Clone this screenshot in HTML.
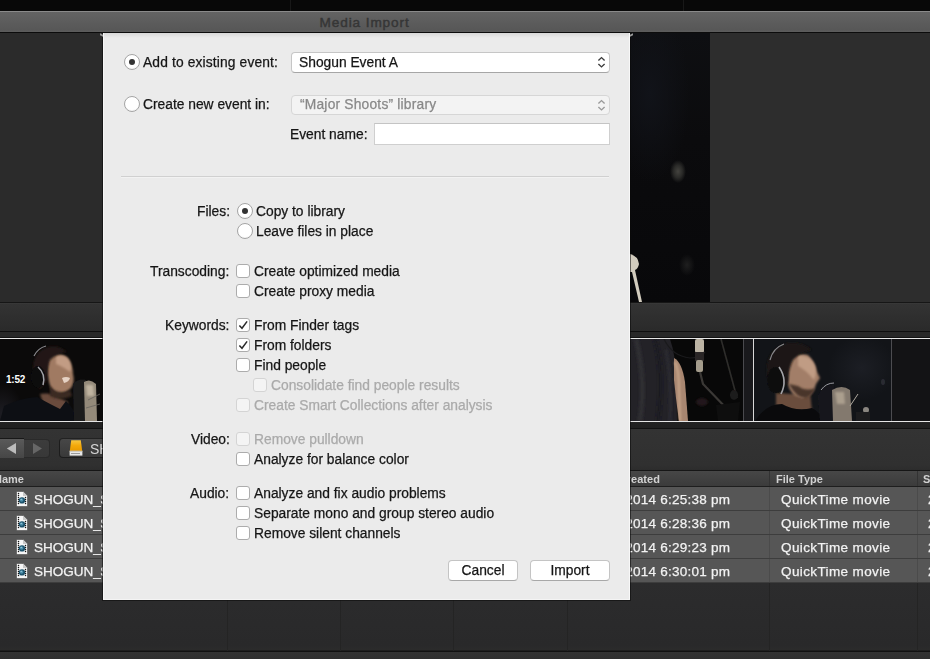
<!DOCTYPE html>
<html><head><meta charset="utf-8">
<style>
*{margin:0;padding:0;box-sizing:border-box}
html,body{width:930px;height:659px;overflow:hidden;background:#2a2a2a;font-family:"Liberation Sans",sans-serif}
.a{position:absolute}
#top{left:0;top:0;width:930px;height:11px;background:#080808}
#title{left:0;top:11px;width:930px;height:22px;background:linear-gradient(#8a8a8a 0,#8a8a8a 1px,#636363 1px,#575757 19px,#5c5c5c 20px,#5c5c5c 21px,#0c0c0c 21px)}
#title span{position:absolute;left:319.5px;top:4px;font-size:13.6px;line-height:16px;color:#363636;letter-spacing:0.9px;-webkit-text-stroke:0.45px #363636}
#lp{left:0;top:33px;width:103px;height:269px;background:#2b2b2b}
#video{left:630px;top:33px;width:80px;height:269px;background:#0c0d11}
#rp{left:710px;top:33px;width:220px;height:269px;background:#2d2d2d}
#strip{left:0;top:302px;width:930px;height:36px;background:linear-gradient(#161616 0,#161616 1px,#3c3c3c 1px,#333 2px,#2a2a2a 29px,#0e0e0e 29px,#0e0e0e 30px,#282828 30px,#282828 35px,#121212 35px)}
#film{left:0;top:338px;width:930px;height:84px;background:#0d0c0c;border-top:1px solid #e6e6e6;border-bottom:1px solid #e6e6e6}
#tb{left:0;top:422px;width:930px;height:48px;background:linear-gradient(#232323 0,#202020 6px,#121212 6px,#121212 7px,#333 7px,#303030 43px,#2c2c2c 48px)}
#hdr{left:0;top:470px;width:930px;height:17px;background:linear-gradient(#161616 0,#161616 1px,#474747 1px,#3b3b3b 16px,#1e1e1e 16px)}
.row{position:absolute;left:0;width:930px;height:24px;background:#565656;border-bottom:1px solid #3d3d3d}
#bot{left:0;top:583px;width:930px;height:76px;background:linear-gradient(#2c2c2d 0,#29292a 62px,#2b2b2b 66px,#2b2b2b 67px,#111 68px,#111 69px,#333 69px,#2f2f2f 76px)}
#dlg{left:103px;top:33px;width:527px;height:567px;background:#ebebeb;color:#222;font-size:13.8px}

.t{position:absolute;font-size:13.8px;line-height:16px;color:#161616;white-space:nowrap;-webkit-text-stroke:0.25px currentColor;will-change:transform}
.t.r{text-align:right}
.t.dt{color:#aaaaaa}
.rad{position:absolute;width:16px;height:16px;border-radius:50%;background:#fff;border:1px solid #a4a4a4;box-shadow:inset 0 -1px 0 rgba(0,0,0,0.04)}
.rad i{position:absolute;left:4px;top:4px;width:6px;height:6px;border-radius:50%;background:#333}
.cb{position:absolute;left:236px;width:14px;height:14px;border-radius:3px;background:#fff;border:1px solid #acacac}
.cb.dis{background:#f4f4f4;border-color:#d4d4d4}
.pop{position:absolute;background:#fff;border:1px solid #c6c6c6;border-bottom-color:#a6a6a6;border-radius:4px}
.pop.dis{background:#f3f3f3;border-color:#d6d6d6}
.pop.dis .t{color:#888}
.btn{position:absolute;height:21px;background:#fff;border:1px solid #c4c4c4;border-bottom-color:#a8a8a8;border-radius:4px;font-size:13.8px;line-height:19px;text-align:center;color:#161616;-webkit-text-stroke:0.25px #161616;will-change:transform}
.hd{position:absolute;top:472px;font-size:11px;line-height:14px;font-weight:bold;color:#d2d2d2;white-space:nowrap;will-change:transform}
.rt{position:absolute;font-size:13.5px;line-height:16px;letter-spacing:0.25px;color:#f2f2f2;white-space:nowrap;-webkit-text-stroke:0.25px #f2f2f2;will-change:transform}
</style></head><body>
<div class="a" id="top"></div>
<div class="a" id="title"><span>Media Import</span></div>
<div class="a" id="lp"></div>
<div class="a" id="video"></div>
<div class="a" id="rp"></div>
<div class="a" id="strip"></div>
<div class="a" id="film"></div>
<svg class="a" style="left:0;top:339px" width="930" height="82" viewBox="0 339 930 82">
<defs>
<filter id="f1" filterUnits="userSpaceOnUse" x="-50" y="300" width="1100" height="160"><feGaussianBlur stdDeviation="1"/></filter>
<filter id="f05" filterUnits="userSpaceOnUse" x="-50" y="300" width="1100" height="160"><feGaussianBlur stdDeviation="0.5"/></filter>
<radialGradient id="g1"><stop offset="0" stop-color="#1d1d23"/><stop offset="1" stop-color="#1d1d23" stop-opacity="0"/></radialGradient>
<radialGradient id="g3"><stop offset="0" stop-color="#1c1e24"/><stop offset="1" stop-color="#1c1e24" stop-opacity="0"/></radialGradient>
<radialGradient id="sk1" cx="0.6" cy="0.4"><stop offset="0" stop-color="#b88f76"/><stop offset="1" stop-color="#6a4a3a"/></radialGradient>
<clipPath id="c1"><rect x="0" y="339" width="103" height="82"/></clipPath>
<clipPath id="c2"><rect x="630" y="339" width="123" height="82"/></clipPath>
<clipPath id="c3"><rect x="754" y="339" width="138" height="82"/></clipPath>
</defs>
<g clip-path="url(#c1)">
<rect x="0" y="339" width="103" height="82" fill="#0b0a0a"/>
<ellipse cx="2" cy="414" rx="22" ry="30" fill="url(#g1)"/>
<path d="M40 394 Q50 392 60 398 L68 402 L66 412 L46 412 Z" fill="#6a4c3c" filter="url(#f1)"/>
<path d="M0 421 L4 406 Q20 398 37 397 Q50 404 60 409 L66 401 Q74 408 78 421 Z" fill="#0d0f14"/>
<path d="M48 356 Q60 351 68 358 Q73 366 73 374 Q75 382 71 388 Q66 394 58 394 Q51 392 49 382 Q46 370 48 356 Z" fill="#a07a62" filter="url(#f1)"/>
<path d="M56 356 Q66 354 70 362 Q72 368 70 372 Q62 366 56 364 Z" fill="#c29c84" filter="url(#f1)"/>
<path d="M50 386 Q58 396 70 390 L72 396 Q60 402 50 396 Z" fill="#3a2a22" filter="url(#f1)"/>
<path d="M33 372 Q32 352 48 347 Q60 345 67 352 Q56 354 50 360 Q47 368 47 380 L40 390 Z" fill="#221813" filter="url(#f1)"/>
<path d="M62 378 Q66 376 70 378 Q69 382 64 383 Z" fill="#e6d2c4" filter="url(#f05)"/>
<path d="M34 356 Q38 348 46 346" stroke="#8a8a8e" stroke-width="1.2" fill="none" filter="url(#f05)"/>
<ellipse cx="38" cy="377" rx="7" ry="11" fill="#0b0b0d" filter="url(#f05)"/>
<path d="M38 367 Q46 374 43 385" stroke="#a4a4aa" stroke-width="1.5" fill="none" filter="url(#f05)"/>
<text x="6" y="383" font-family="Liberation Sans" font-weight="bold" font-size="10" fill="#fff" letter-spacing="-0.2">1:52</text>
<path d="M73 384 Q78 378 86 380 L87 421 L74 421 Z" fill="#1a1a1e" filter="url(#f05)"/>
<path d="M84 382 Q90 378 96 384 L97 421 L85 421 Z" fill="#948a7a" filter="url(#f05)"/>
<path d="M86 385 L93 385 L94 396 L87 396 Z" fill="#c0b4a0" filter="url(#f1)"/>
<path d="M88 400 L100 394 M86 408 L100 404" stroke="#6a6660" stroke-width="0.8" fill="none"/>
</g>
<g clip-path="url(#c2)">
<rect x="630" y="339" width="123" height="82" fill="#080808"/>
<path d="M630 339 L670 339 Q676 356 676 380 L677 421 L630 421 Z" fill="#232227"/>
<path d="M636 339 Q646 380 640 421" stroke="#2e2d33" stroke-width="5" fill="none" filter="url(#f1)"/>
<path d="M655 339 Q664 372 658 421" stroke="#1c1b20" stroke-width="4" fill="none" filter="url(#f1)"/>
<path d="M666 350 Q672 380 670 421" stroke="#2c2b31" stroke-width="3" fill="none" filter="url(#f1)"/>
<path d="M674 358 Q682 362 685 382 L688 421 L679 421 Q676 400 674 380 Z" fill="#a88670" filter="url(#f05)"/>
<path d="M675 362 Q679 370 679 390 L680 421" stroke="#caa88c" stroke-width="2" fill="none" filter="url(#f1)"/>
<path d="M664 339 Q672 356 690 358 Q700 358 705 352" stroke="#1a1a1c" stroke-width="1.2" fill="none"/>
<rect x="695" y="339" width="9" height="14" rx="2" fill="#bcb4a4" filter="url(#f05)"/>
<rect x="695" y="352" width="9" height="9" fill="#2a2826" filter="url(#f05)"/>
<rect x="696" y="360" width="7" height="12" rx="2" fill="#a49c8c" filter="url(#f05)"/>
<path d="M700 372 L703 384 L730 412" stroke="#3a3836" stroke-width="2.2" fill="none" filter="url(#f05)"/>
<path d="M721 339 L737 398" stroke="#2e2d2c" stroke-width="1.6" fill="none" filter="url(#f05)"/>
<ellipse cx="734" cy="395" rx="4" ry="5" fill="#1c1b1b" filter="url(#f05)"/>
<path d="M716 405 L740 402 L738 421 L718 421 Z" fill="#0e0e0e"/>
<ellipse cx="702" cy="402" rx="6" ry="4" fill="#24181a" filter="url(#f1)"/>
<rect x="743" y="339" width="10" height="82" fill="#19191c"/>
<rect x="743" y="339" width="1" height="82" fill="#4a4a4e"/>
</g>
<rect x="753" y="339" width="1" height="82" fill="#d8d8d8"/>
<g clip-path="url(#c3)">
<rect x="754" y="339" width="138" height="82" fill="#121418"/>
<ellipse cx="862" cy="368" rx="34" ry="32" fill="url(#g3)"/>
<ellipse cx="883" cy="382" rx="2" ry="3" fill="#2a2c31" filter="url(#f05)"/>
<path d="M776 392 Q792 396 810 392 L812 412 Q792 418 776 410 Z" fill="#6a4e3e" filter="url(#f1)"/>
<path d="M755 421 Q766 404 782 404 Q796 412 812 408 Q820 412 823 421 Z" fill="#0a0a0c"/>
<path d="M788 360 Q798 352 808 355 Q815 362 817 372 L820 378 L816 384 Q814 396 802 398 Q790 396 788 384 Z" fill="#a27e68" filter="url(#f1)"/>
<path d="M798 356 Q810 354 815 366 Q817 374 814 380 Q806 370 798 366 Z" fill="#c09c84" filter="url(#f1)"/>
<path d="M789 384 Q796 398 806 398 Q813 395 815 388 Q806 392 798 386 Z" fill="#4a362a" filter="url(#f1)"/>
<path d="M767 376 Q764 352 784 344 Q800 340 812 350 Q800 352 793 360 Q788 370 788 382 L778 394 Z" fill="#1e1612" filter="url(#f1)"/>
<path d="M770 360 Q773 348 784 344" stroke="#88888c" stroke-width="1.2" fill="none" filter="url(#f05)"/>
<ellipse cx="776" cy="380" rx="9" ry="13" fill="#0c0c0e" filter="url(#f05)"/>
<path d="M779 367 Q788 380 781 394" stroke="#a4a4a8" stroke-width="1.6" fill="none" filter="url(#f05)"/>
<path d="M818 396 Q822 385 834 385 L836 421 L820 421 Z" fill="#18181c" filter="url(#f05)"/>
<path d="M821 390 Q826 383 834 383" stroke="#9a9aa0" stroke-width="1" fill="none"/>
<path d="M832 390 Q842 384 850 390 L852 421 L833 421 Z" fill="#83796e" filter="url(#f05)"/>
<path d="M835 392 L844 392 L845 404 L837 404 Z" fill="#ab9f8e" filter="url(#f1)"/>
<path d="M850 406 L858 394" stroke="#b0aaa0" stroke-width="1" fill="none"/>
<ellipse cx="866" cy="410" rx="3" ry="3" fill="#8a8680" filter="url(#f05)"/>
<rect x="856" y="412" width="14" height="9" fill="#1c1c1e"/>
<rect x="891" y="339" width="1" height="82" fill="#4c4c50"/>
</g>
<rect x="892" y="339" width="38" height="82" fill="#131315"/>
</svg>
<div class="a" id="tb"></div>
<div class="a" style="left:-6px;top:439px;width:30px;height:19px;border-radius:4px 0 0 4px;background:linear-gradient(#5a5a5a,#464646);box-shadow:0 -1px 0 #181818"></div>
<div class="a" style="left:24px;top:439px;width:26px;height:19px;border-radius:0 4px 4px 0;background:linear-gradient(#3c3c3c,#383838);border:1px solid #2a2a2a;border-left:0"></div>
<svg class="a" style="left:0;top:438px" width="50" height="20" viewBox="0 438 50 20"><path d="M6.8 448.6 L16 443 L16 454 Z" fill="#bcbcbc"/><path d="M42 448.6 L33 443 L33 454 Z" fill="#666"/></svg>
<div class="a" style="left:59px;top:438px;width:60px;height:20px;border-radius:4px;background:linear-gradient(#474747,#393939);border:1px solid #1c1c1c;border-top-color:#222"></div>
<svg class="a" style="left:68px;top:439px" width="16" height="18" viewBox="0 0 16 18"><defs><linearGradient id="dg" x1="0" y1="0" x2="0" y2="1"><stop offset="0" stop-color="#f6c640"/><stop offset="0.5" stop-color="#f4a90a"/><stop offset="1" stop-color="#e89a00"/></linearGradient></defs><path d="M3.2 1.2 L12.8 1.2 L14.2 12 L1.8 12 Z" fill="url(#dg)"/><rect x="1.6" y="12" width="12.8" height="4.6" fill="#e6e6e6"/><rect x="1.6" y="11.6" width="12.8" height="1" fill="#bdb7a8"/><rect x="3" y="14" width="9" height="1" fill="#9a9a9a"/></svg>
<div class="a" style="left:90px;top:441px;font-size:14px;line-height:16px;color:#d6d6d6;will-change:transform">SHOGUN</div>
<div class="a" id="hdr"></div>
<div class="hd" style="left:-6.5px">Name</div>
<div class="hd" style="left:592px">Date Created</div>
<div class="hd" style="left:776px">File Type</div>
<div class="hd" style="left:923px">Size</div>
<div class="a" style="left:769px;top:471px;width:1px;height:15px;background:#333"></div>
<div class="a" style="left:917px;top:471px;width:1px;height:15px;background:#333"></div>
<div class="row" style="top:487px"></div>
<svg class="a" style="left:16px;top:491px" width="12" height="16" viewBox="0 0 12 16"><path d="M0.5 0.5 L7 0.5 L11.5 5 L11.5 15.5 L0.5 15.5 Z" fill="#f6f6f6" stroke="#3a3a3a" stroke-width="0.5"/><path d="M7 0.5 L7 5 L11.5 5 Z" fill="#c8c8c8"/><g fill="#151515"><circle cx="2.5" cy="2.6" r="0.75"/><circle cx="2.5" cy="4.6" r="0.75"/><circle cx="2.5" cy="6.6" r="0.75"/><circle cx="2.5" cy="8.6" r="0.75"/><circle cx="2.5" cy="10.6" r="0.75"/><circle cx="2.5" cy="12.6" r="0.75"/><circle cx="9.5" cy="6.6" r="0.75"/><circle cx="9.5" cy="8.6" r="0.75"/><circle cx="9.5" cy="10.6" r="0.75"/><circle cx="9.5" cy="12.6" r="0.75"/></g><circle cx="6" cy="9.4" r="3.1" fill="#1d536c"/><circle cx="5.6" cy="9" r="1.8" fill="#4d8fab"/><circle cx="5.2" cy="8.4" r="0.7" fill="#9fd0e0"/></svg>
<div class="rt" style="left:34px;top:492px;letter-spacing:0">SHOGUN<span style="letter-spacing:-0.6px">_</span>S1</div>
<div class="rt" style="right:200px;top:492px">8/05/2014 6:25:38 pm</div>
<div class="rt" style="left:781px;top:492px;letter-spacing:0.38px">QuickTime movie</div>
<div class="rt" style="left:928px;top:492px">2</div>
<div class="a" style="left:769px;top:487px;width:1px;height:23px;background:#4b4b4b"></div>
<div class="a" style="left:917px;top:487px;width:1px;height:23px;background:#4b4b4b"></div>
<div class="row" style="top:511px"></div>
<svg class="a" style="left:16px;top:515px" width="12" height="16" viewBox="0 0 12 16"><path d="M0.5 0.5 L7 0.5 L11.5 5 L11.5 15.5 L0.5 15.5 Z" fill="#f6f6f6" stroke="#3a3a3a" stroke-width="0.5"/><path d="M7 0.5 L7 5 L11.5 5 Z" fill="#c8c8c8"/><g fill="#151515"><circle cx="2.5" cy="2.6" r="0.75"/><circle cx="2.5" cy="4.6" r="0.75"/><circle cx="2.5" cy="6.6" r="0.75"/><circle cx="2.5" cy="8.6" r="0.75"/><circle cx="2.5" cy="10.6" r="0.75"/><circle cx="2.5" cy="12.6" r="0.75"/><circle cx="9.5" cy="6.6" r="0.75"/><circle cx="9.5" cy="8.6" r="0.75"/><circle cx="9.5" cy="10.6" r="0.75"/><circle cx="9.5" cy="12.6" r="0.75"/></g><circle cx="6" cy="9.4" r="3.1" fill="#1d536c"/><circle cx="5.6" cy="9" r="1.8" fill="#4d8fab"/><circle cx="5.2" cy="8.4" r="0.7" fill="#9fd0e0"/></svg>
<div class="rt" style="left:34px;top:516px;letter-spacing:0">SHOGUN<span style="letter-spacing:-0.6px">_</span>S2</div>
<div class="rt" style="right:200px;top:516px">8/05/2014 6:28:36 pm</div>
<div class="rt" style="left:781px;top:516px;letter-spacing:0.38px">QuickTime movie</div>
<div class="rt" style="left:928px;top:516px">2</div>
<div class="a" style="left:769px;top:511px;width:1px;height:23px;background:#4b4b4b"></div>
<div class="a" style="left:917px;top:511px;width:1px;height:23px;background:#4b4b4b"></div>
<div class="row" style="top:535px"></div>
<svg class="a" style="left:16px;top:539px" width="12" height="16" viewBox="0 0 12 16"><path d="M0.5 0.5 L7 0.5 L11.5 5 L11.5 15.5 L0.5 15.5 Z" fill="#f6f6f6" stroke="#3a3a3a" stroke-width="0.5"/><path d="M7 0.5 L7 5 L11.5 5 Z" fill="#c8c8c8"/><g fill="#151515"><circle cx="2.5" cy="2.6" r="0.75"/><circle cx="2.5" cy="4.6" r="0.75"/><circle cx="2.5" cy="6.6" r="0.75"/><circle cx="2.5" cy="8.6" r="0.75"/><circle cx="2.5" cy="10.6" r="0.75"/><circle cx="2.5" cy="12.6" r="0.75"/><circle cx="9.5" cy="6.6" r="0.75"/><circle cx="9.5" cy="8.6" r="0.75"/><circle cx="9.5" cy="10.6" r="0.75"/><circle cx="9.5" cy="12.6" r="0.75"/></g><circle cx="6" cy="9.4" r="3.1" fill="#1d536c"/><circle cx="5.6" cy="9" r="1.8" fill="#4d8fab"/><circle cx="5.2" cy="8.4" r="0.7" fill="#9fd0e0"/></svg>
<div class="rt" style="left:34px;top:540px;letter-spacing:0">SHOGUN<span style="letter-spacing:-0.6px">_</span>S3</div>
<div class="rt" style="right:200px;top:540px">8/05/2014 6:29:23 pm</div>
<div class="rt" style="left:781px;top:540px;letter-spacing:0.38px">QuickTime movie</div>
<div class="rt" style="left:928px;top:540px">2</div>
<div class="a" style="left:769px;top:535px;width:1px;height:23px;background:#4b4b4b"></div>
<div class="a" style="left:917px;top:535px;width:1px;height:23px;background:#4b4b4b"></div>
<div class="row" style="top:559px"></div>
<svg class="a" style="left:16px;top:563px" width="12" height="16" viewBox="0 0 12 16"><path d="M0.5 0.5 L7 0.5 L11.5 5 L11.5 15.5 L0.5 15.5 Z" fill="#f6f6f6" stroke="#3a3a3a" stroke-width="0.5"/><path d="M7 0.5 L7 5 L11.5 5 Z" fill="#c8c8c8"/><g fill="#151515"><circle cx="2.5" cy="2.6" r="0.75"/><circle cx="2.5" cy="4.6" r="0.75"/><circle cx="2.5" cy="6.6" r="0.75"/><circle cx="2.5" cy="8.6" r="0.75"/><circle cx="2.5" cy="10.6" r="0.75"/><circle cx="2.5" cy="12.6" r="0.75"/><circle cx="9.5" cy="6.6" r="0.75"/><circle cx="9.5" cy="8.6" r="0.75"/><circle cx="9.5" cy="10.6" r="0.75"/><circle cx="9.5" cy="12.6" r="0.75"/></g><circle cx="6" cy="9.4" r="3.1" fill="#1d536c"/><circle cx="5.6" cy="9" r="1.8" fill="#4d8fab"/><circle cx="5.2" cy="8.4" r="0.7" fill="#9fd0e0"/></svg>
<div class="rt" style="left:34px;top:564px;letter-spacing:0">SHOGUN<span style="letter-spacing:-0.6px">_</span>S4</div>
<div class="rt" style="right:200px;top:564px">8/05/2014 6:30:01 pm</div>
<div class="rt" style="left:781px;top:564px;letter-spacing:0.38px">QuickTime movie</div>
<div class="rt" style="left:928px;top:564px">2</div>
<div class="a" style="left:769px;top:559px;width:1px;height:23px;background:#4b4b4b"></div>
<div class="a" style="left:917px;top:559px;width:1px;height:23px;background:#4b4b4b"></div>
<div class="a" id="bot"></div>
<div class="a" style="left:227px;top:583px;width:1px;height:68px;background:#242424"></div>
<div class="a" style="left:340px;top:583px;width:1px;height:68px;background:#242424"></div>
<div class="a" style="left:453px;top:583px;width:1px;height:68px;background:#242424"></div>
<div class="a" style="left:567px;top:583px;width:1px;height:68px;background:#242424"></div>
<div class="a" style="left:769px;top:583px;width:1px;height:68px;background:#242424"></div>
<div class="a" style="left:917px;top:583px;width:1px;height:68px;background:#242424"></div>
<div class="a" style="left:290px;top:0;width:1px;height:11px;background:#181818"></div>
<div class="a" style="left:683px;top:0;width:1px;height:11px;background:#181818"></div>
<div class="a" style="left:630px;top:33px;width:80px;height:269px;background:radial-gradient(ellipse 40px 90px at 20px 60px,#111319,rgba(12,13,17,0)),linear-gradient(#0e0f12,#0b0b0d 40%,#08080a)"></div>
<div class="a" style="left:670px;top:160px;width:16px;height:23px;border-radius:50%;background:radial-gradient(closest-side,#44433f,#2a2a28 55%,rgba(20,20,20,0))"></div>
<div class="a" style="left:679px;top:254px;width:16px;height:22px;border-radius:50%;background:radial-gradient(closest-side,#1f1f1f,rgba(20,20,20,0))"></div>
<svg class="a" style="left:630px;top:33px" width="80" height="269" viewBox="0 0 80 269">
<path d="M0 221 Q8 223 9 231 Q8 236 5 237 L12 269 L9 269 L2 239 L0 239 Z" fill="#d2ccbe"/>
</svg>

<div class="a" style="left:102px;top:33px;width:529px;height:568px;background:rgba(10,10,10,0.55)"></div>
<div class="a" id="dlg"></div>
<div class="a" style="left:103px;top:33px;width:527px;height:5px;background:linear-gradient(#d8d8d8 0,#e0e0e0 2px,#ebebeb 5px)"></div>
<div class="a" style="left:103px;top:33px;width:1px;height:567px;background:#f6f6f6"></div>
<div class="a" style="left:629px;top:33px;width:1px;height:567px;background:#f8f8f8"></div>
<div class="a" style="left:103px;top:599px;width:527px;height:1px;background:#f4f4f4"></div>
<div class="a" style="left:630px;top:34px;width:3px;height:2px;background:#9a9a9a;transform:skewY(-30deg)"></div>
<div class="a" style="left:100px;top:34px;width:3px;height:2px;background:#9a9a9a;transform:skewY(30deg)"></div>
<div class="rad" style="left:124px;top:54px"><i></i></div>
<div class="t" style="left:143px;top:55px;letter-spacing:0.14px">Add to existing event:</div>
<div class="rad" style="left:124px;top:96px"></div>
<div class="t" style="left:143px;top:97px">Create new event in:</div>
<div class="pop" style="left:291px;top:52px;width:319px;height:21px"><span class="t" style="left:7px;top:2px">Shogun Event A</span>
<svg class="a" style="left:305px;top:3px" width="9" height="13" viewBox="0 0 9 13"><path d="M1.4 4.5 L4.5 1.6 L7.6 4.5 M1.4 8.0 L4.5 10.9 L7.6 8.0" fill="none" stroke="#3c3c3c" stroke-width="1.4"/></svg></div>
<div class="pop dis" style="left:291px;top:95px;width:319px;height:20px"><span class="t" style="left:7.5px;top:1px;letter-spacing:0.2px">“Major Shoots” library</span>
<svg class="a" style="left:305px;top:3px" width="9" height="13" viewBox="0 0 9 13"><path d="M1.4 4.5 L4.5 1.6 L7.6 4.5 M1.4 8.0 L4.5 10.9 L7.6 8.0" fill="none" stroke="#9a9a9a" stroke-width="1.4"/></svg></div>
<div class="t" style="left:290px;top:127px">Event name:</div>
<div class="a" style="left:374px;top:123px;width:236px;height:22px;background:#fff;border:1px solid #cfcfcf;border-top-color:#c4c4c4"></div>
<div class="a" style="left:121px;top:176px;width:488px;height:1px;background:#d0d0d0"></div><div class="a" style="left:121px;top:177px;width:488px;height:1px;background:#f2f2f2"></div>

<div class="t r" style="right:700.5px;top:204px">Files:</div>
<div class="rad" style="left:237px;top:203px"><i></i></div>
<div class="t" style="left:256px;top:204px">Copy to library</div>
<div class="rad" style="left:237px;top:223px"></div>
<div class="t" style="left:256px;top:224px">Leave files in place</div>

<div class="t r" style="right:700.5px;top:264px">Transcoding:</div>
<div class="cb" style="top:264px"></div><div class="t" style="left:254px;top:264px">Create optimized media</div>
<div class="cb" style="top:284px"></div><div class="t" style="left:254px;top:284px">Create proxy media</div>

<div class="t r" style="right:700.5px;top:318px">Keywords:</div>
<div class="cb" style="top:318px"><svg class="a" style="left:1px;top:1px" width="12" height="12" viewBox="0 0 12 12"><path d="M1.4 5.5 L4 8.3 L9.1 1.4" fill="none" stroke="#2a2a2a" stroke-width="1.5"/></svg></div><div class="t" style="left:254px;top:318px">From Finder tags</div>
<div class="cb" style="top:338px"><svg class="a" style="left:1px;top:1px" width="12" height="12" viewBox="0 0 12 12"><path d="M1.4 5.5 L4 8.3 L9.1 1.4" fill="none" stroke="#2a2a2a" stroke-width="1.5"/></svg></div><div class="t" style="left:254px;top:338px">From folders</div>
<div class="cb" style="top:358px"></div><div class="t" style="left:254px;top:358px">Find people</div>
<div class="cb dis" style="left:253px;top:378px"></div><div class="t dt" style="left:271px;top:378px">Consolidate find people results</div>
<div class="cb dis" style="top:398px"></div><div class="t dt" style="left:254px;top:398px">Create Smart Collections after analysis</div>

<div class="t r" style="right:700.5px;top:432px">Video:</div>
<div class="cb dis" style="top:432px"></div><div class="t dt" style="left:254px;top:432px">Remove pulldown</div>
<div class="cb" style="top:452px"></div><div class="t" style="left:254px;top:452px">Analyze for balance color</div>

<div class="t r" style="right:700.5px;top:486px">Audio:</div>
<div class="cb" style="top:486px"></div><div class="t" style="left:254px;top:486px">Analyze and fix audio problems</div>
<div class="cb" style="top:506px"></div><div class="t" style="left:254px;top:506px">Separate mono and group stereo audio</div>
<div class="cb" style="top:526px"></div><div class="t" style="left:254px;top:526px">Remove silent channels</div>

<div class="btn" style="left:448px;top:560px;width:70px">Cancel</div>
<div class="btn" style="left:530px;top:560px;width:80px">Import</div>

</body></html>
